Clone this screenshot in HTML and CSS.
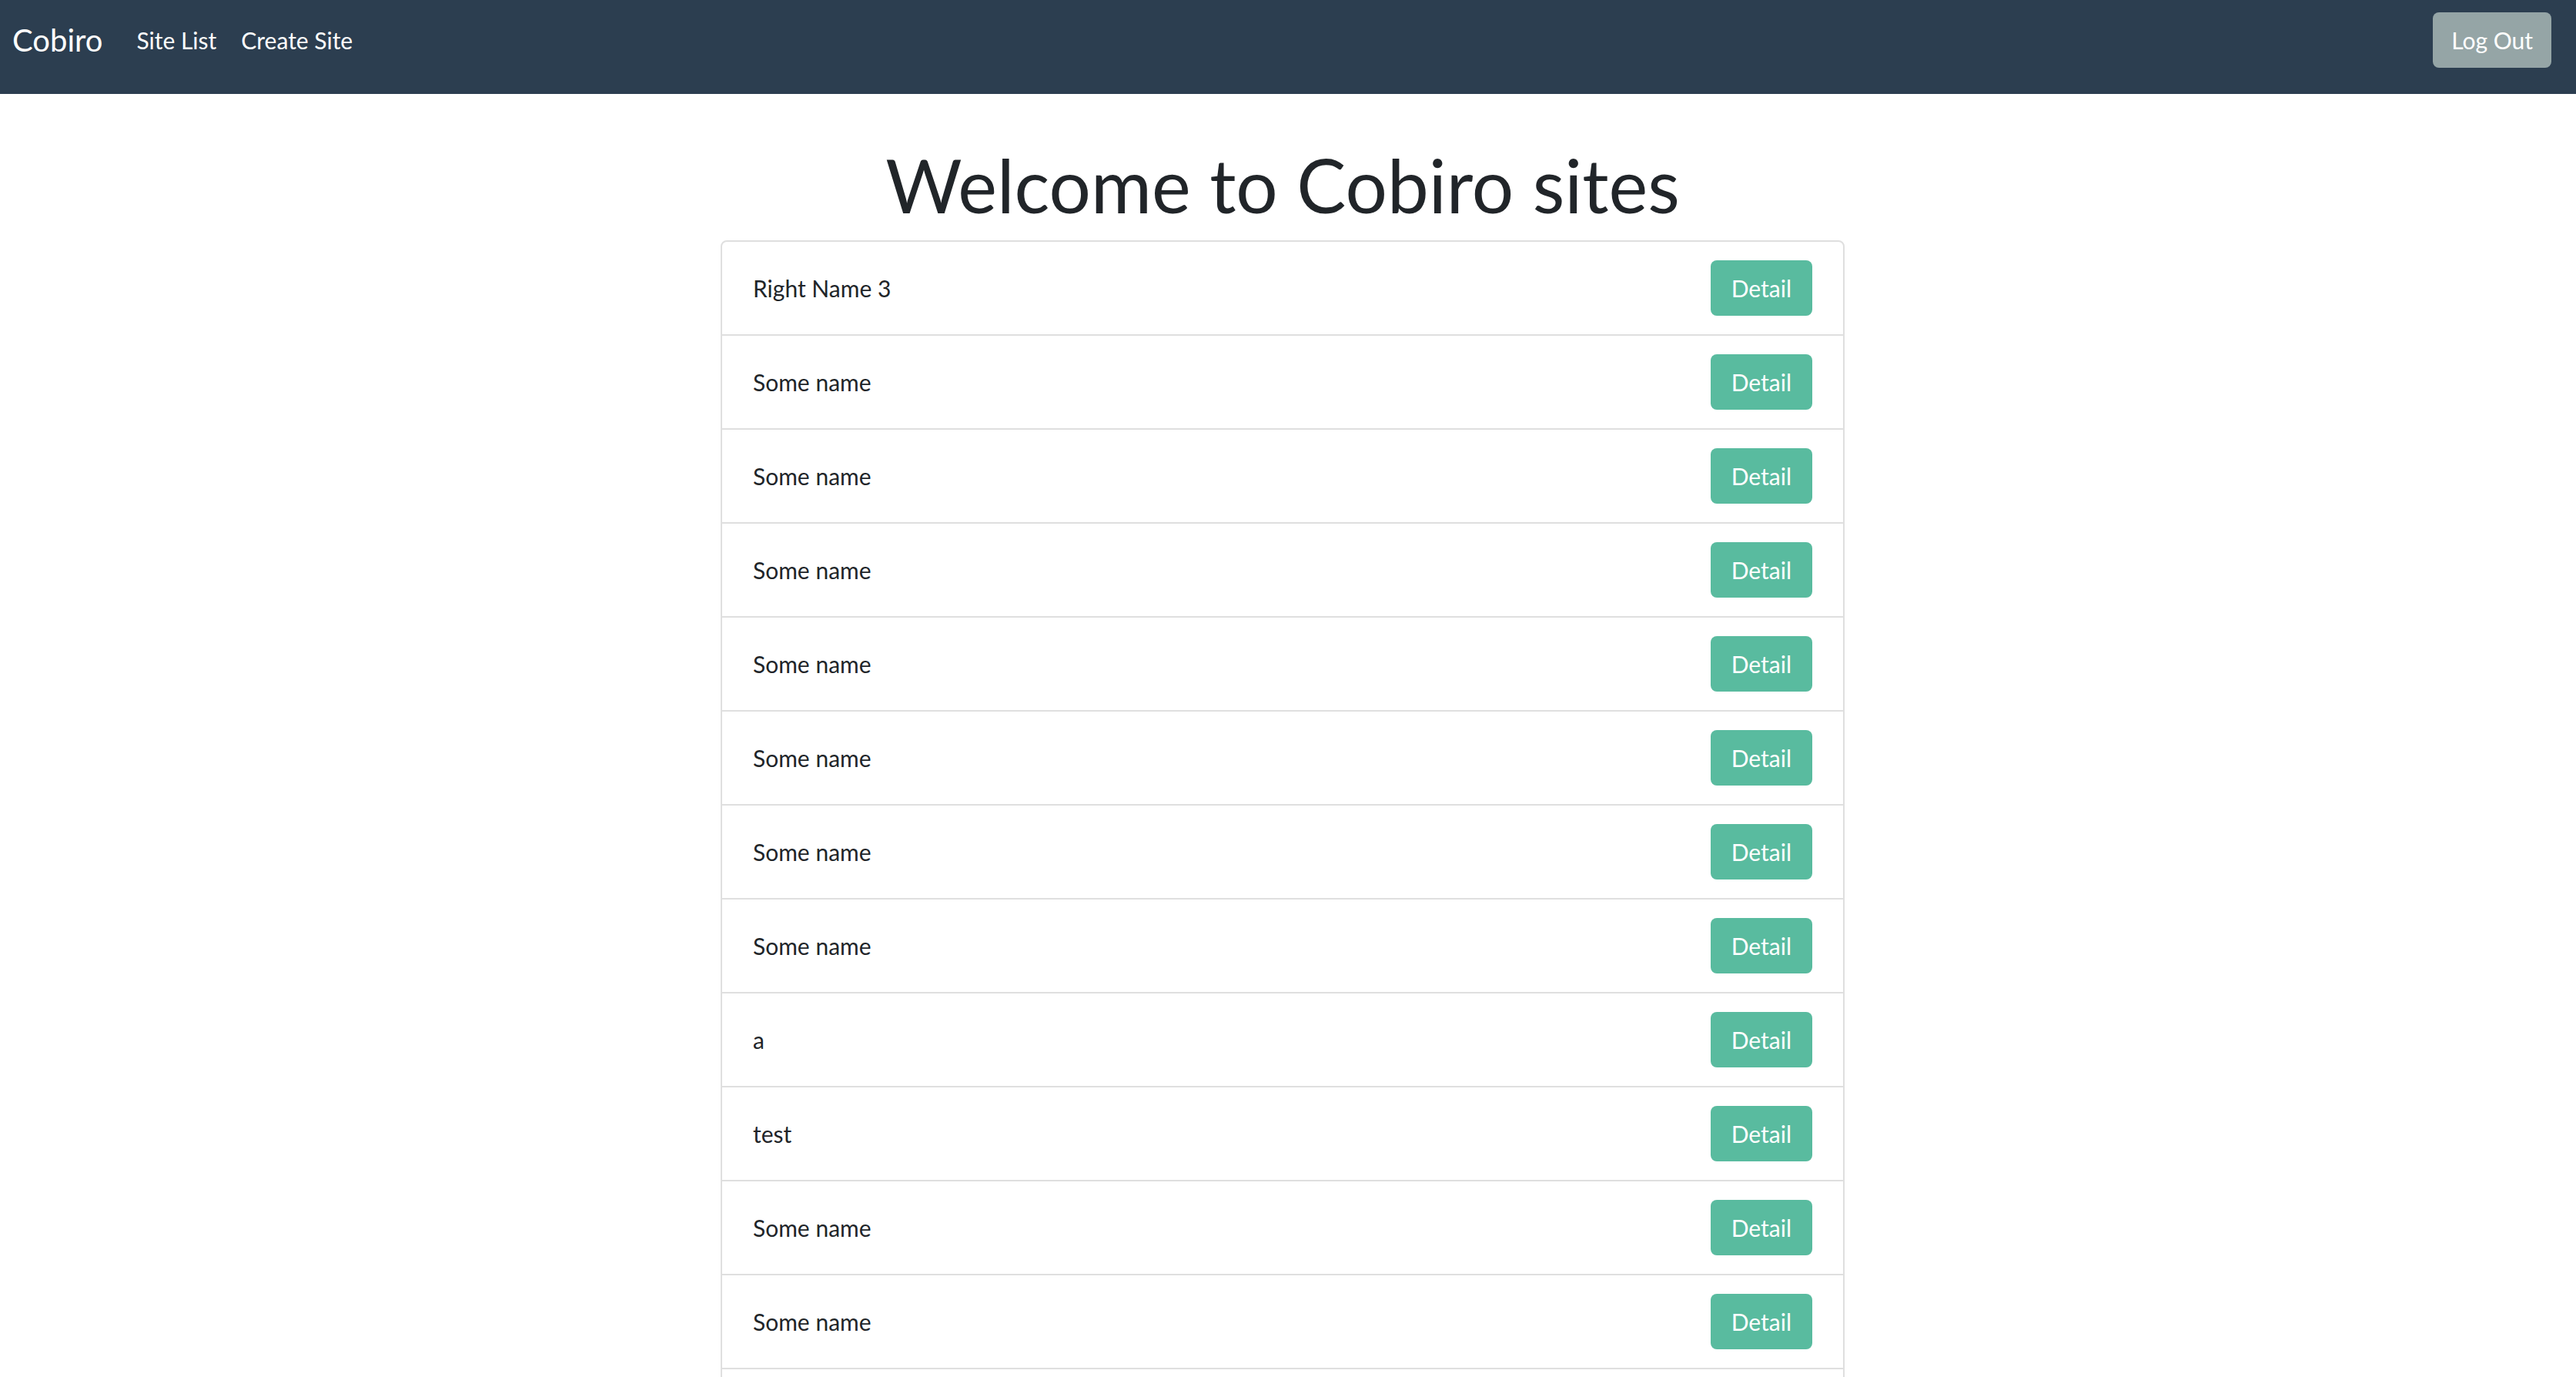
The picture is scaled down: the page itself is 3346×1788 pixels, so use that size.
FILE: index.html
```html
<!DOCTYPE html>
<html lang="en">
<head>
<meta charset="utf-8">
<title>Cobiro sites</title>
<link rel="stylesheet" href="styles.css">
</head>
<body>
<nav class="navbar">
  <a class="brand" href="#">Cobiro</a>
  <ul class="nav-links">
    <li><a class="nav-link" href="#">Site List</a></li>
    <li><a class="nav-link" href="#">Create Site</a></li>
  </ul>
  <button class="btn btn-logout" type="button">Log Out</button>
</nav>
<main class="main">
  <h1 class="title">Welcome to Cobiro sites</h1>
  <ul class="site-list">
    <li class="site-item"><span class="site-name">Right Name 3</span><button class="btn btn-detail" type="button">Detail</button></li>
    <li class="site-item"><span class="site-name">Some name</span><button class="btn btn-detail" type="button">Detail</button></li>
    <li class="site-item"><span class="site-name">Some name</span><button class="btn btn-detail" type="button">Detail</button></li>
    <li class="site-item"><span class="site-name">Some name</span><button class="btn btn-detail" type="button">Detail</button></li>
    <li class="site-item"><span class="site-name">Some name</span><button class="btn btn-detail" type="button">Detail</button></li>
    <li class="site-item"><span class="site-name">Some name</span><button class="btn btn-detail" type="button">Detail</button></li>
    <li class="site-item"><span class="site-name">Some name</span><button class="btn btn-detail" type="button">Detail</button></li>
    <li class="site-item"><span class="site-name">Some name</span><button class="btn btn-detail" type="button">Detail</button></li>
    <li class="site-item"><span class="site-name">a</span><button class="btn btn-detail" type="button">Detail</button></li>
    <li class="site-item"><span class="site-name">test</span><button class="btn btn-detail" type="button">Detail</button></li>
    <li class="site-item"><span class="site-name">Some name</span><button class="btn btn-detail" type="button">Detail</button></li>
    <li class="site-item"><span class="site-name">Some name</span><button class="btn btn-detail" type="button">Detail</button></li>
    <li class="site-item"><span class="site-name">Some name</span><button class="btn btn-detail" type="button">Detail</button></li>
  </ul>
</main>
</body>
</html>
```
FILE: styles.css
```css
* { box-sizing: border-box; }
html, body {
  margin: 0;
  padding: 0;
  height: 100%;
  overflow: hidden;
  background: #fff;
}
body {
  font-family: Lato, "Open Sans", "Liberation Sans", sans-serif;
  font-size: 30px;
  color: #212529;
}
.navbar {
  display: flex;
  align-items: flex-start;
  height: 122px;
  padding: 16px 32px 34px 16px;
  background: #2c3e50;
}
.brand {
  font-size: 40px;
  line-height: 72px;
  color: #fff;
  text-decoration: none;
  margin-right: 28px;
}
.nav-links {
  display: flex;
  list-style: none;
  margin: 0;
  padding: 0;
  flex: 1;
}
.nav-link {
  display: block;
  font-size: 30px;
  line-height: 72px;
  padding: 0 16px;
  color: #fff;
  text-decoration: none;
}
.btn {
  font-family: inherit;
  font-size: 30px;
  line-height: 45px;
  height: 72px;
  padding: 0 24px;
  border: 0;
  border-radius: 8px;
  color: #fff;
  cursor: pointer;
}
.btn-logout {
  background: #95a5a6;
}
.main {
  padding-right: 14px;
  display: flex;
  flex-direction: column;
  align-items: center;
}
.title {
  font-size: 96px;
  font-weight: 400;
  line-height: 1.2;
  margin: 60px 0 15px;
  color: #212529;
}
.site-list {
  width: 1460px;
  list-style: none;
  margin: 0;
  padding: 0;
  border: 2px solid #dfdfdf;
  border-radius: 8px;
}
.site-item {
  display: flex;
  align-items: center;
  justify-content: space-between;
  padding: 24px 40px;
  line-height: 45px;
}
.site-item + .site-item {
  border-top: 2px solid #dfdfdf;
}
.btn-detail {
  background: #59bb9f;
  padding: 0 27px;
}
```
